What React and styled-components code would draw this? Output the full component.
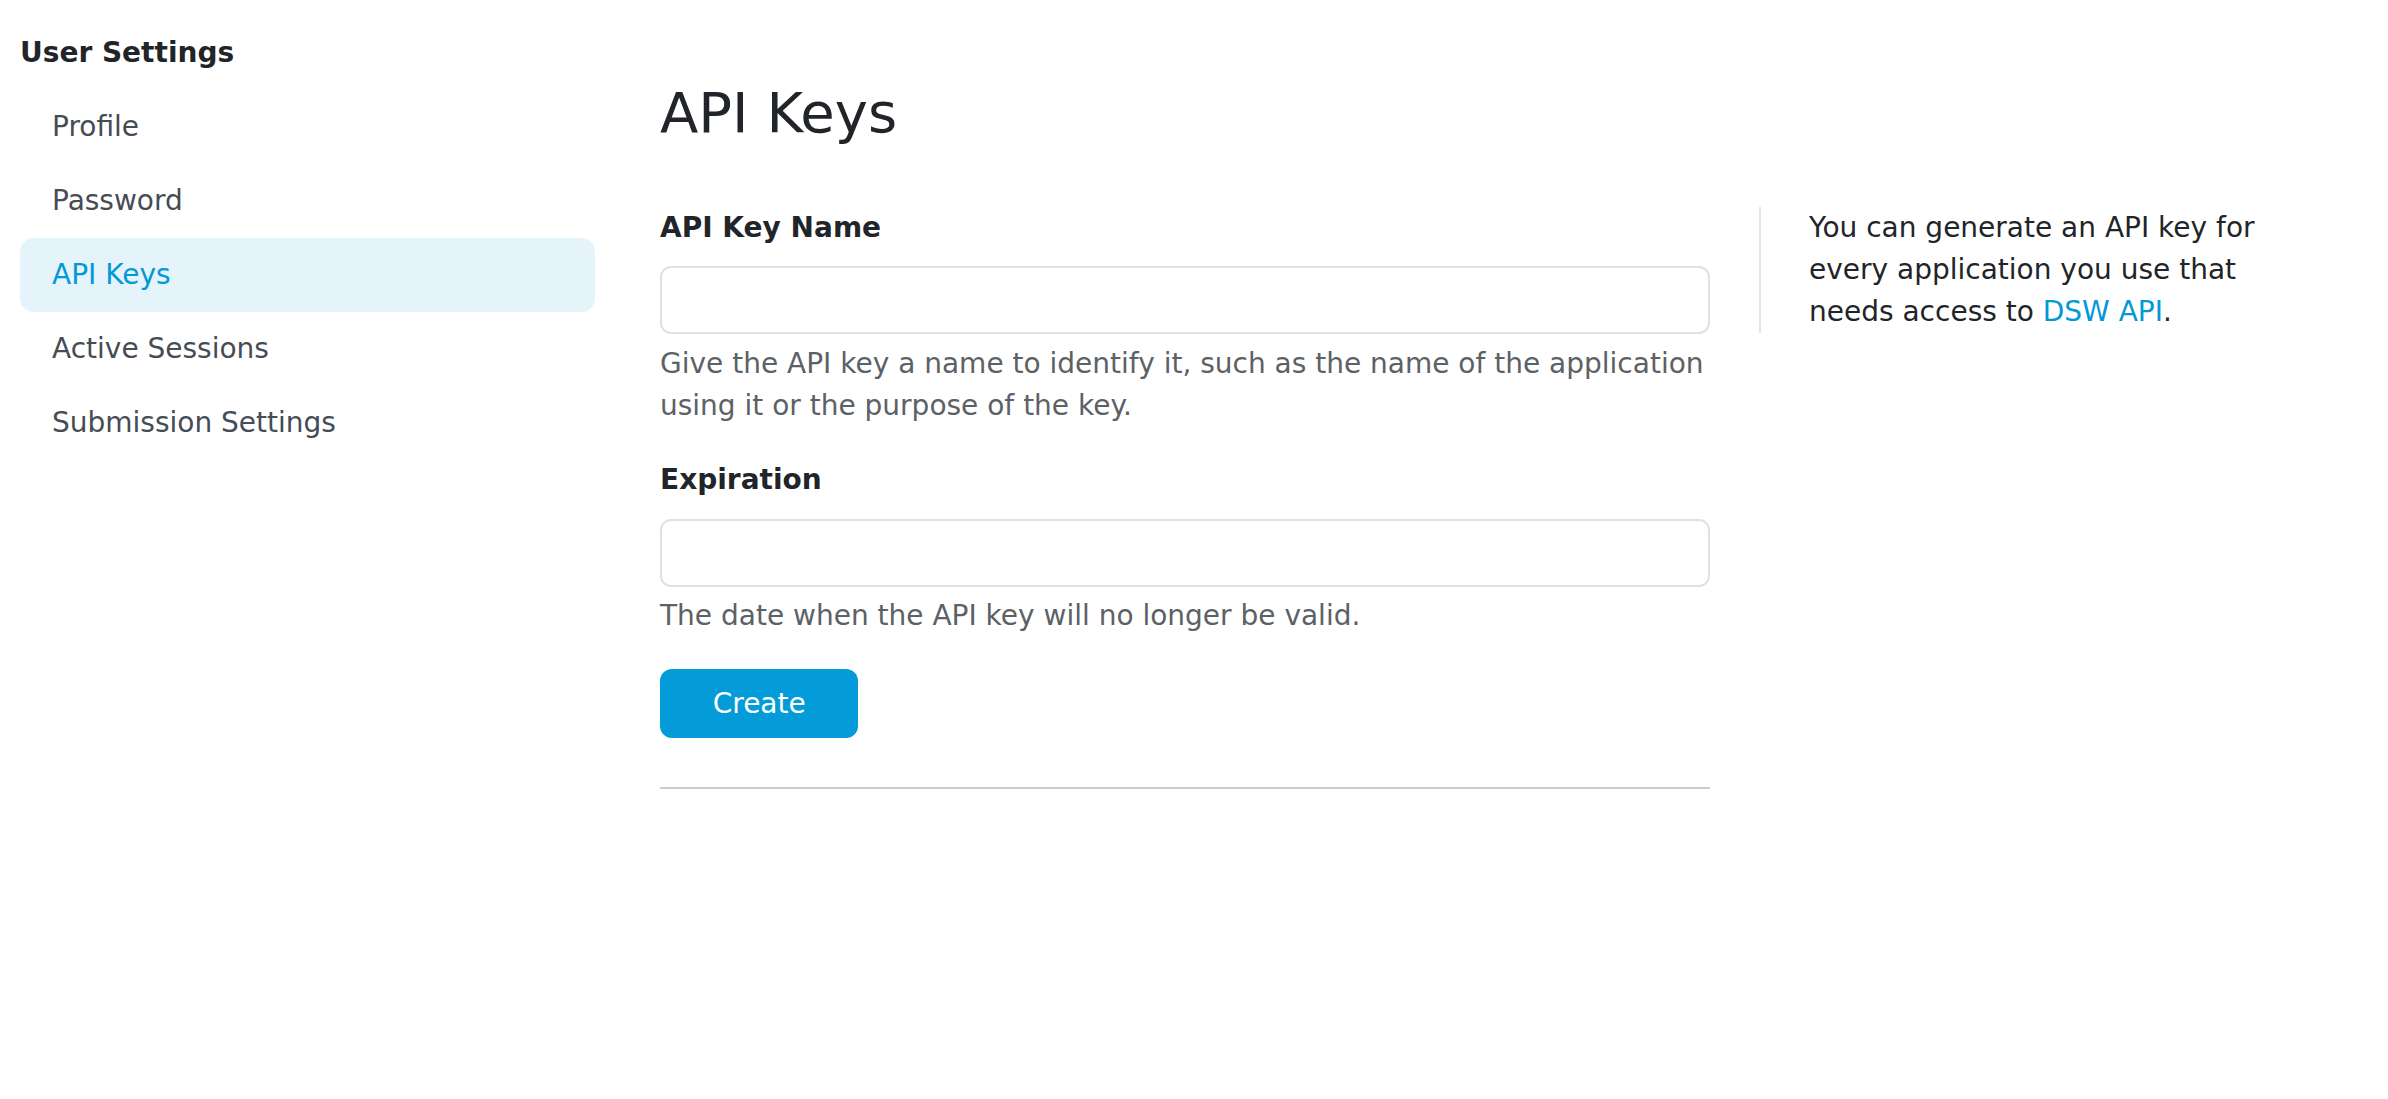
import styled, { createGlobalStyle } from "styled-components";

const GlobalStyle = createGlobalStyle`
    body {
        margin: 0;
        background: #ffffff;
        font-family: "DejaVu Sans", "Noto Sans", sans-serif;
        font-size: 28px;
        line-height: 1.5;
        color: #212529;
    }

    * {
        box-sizing: border-box;
    }
`

const menuItems = ["Profile", "Password", "API Keys", "Active Sessions", "Submission Settings"];

const App = () => {
    return (
        <>
            <GlobalStyle />

            <Page>

                {/* Sidebar */}
                <Sidebar>
                    <SidebarTitle>User Settings</SidebarTitle>

                    <Menu>
                        {menuItems.map((item) => (
                            <MenuItem key={item} $active={item === "API Keys"}>
                                {item}
                            </MenuItem>
                        ))}
                    </Menu>
                </Sidebar>

                {/* Content */}
                <Main>
                    <PageTitle>API Keys</PageTitle>

                    <ContentRow>

                        <Form>
                            <Field>
                                <Label htmlFor="api-key-name">API Key Name</Label>
                                <Input id="api-key-name" type="text" />
                                <HelpText>
                                    Give the API key a name to identify it, such as the name of the application using it or the purpose of the key.
                                </HelpText>
                            </Field>

                            <Field>
                                <Label htmlFor="expiration">Expiration</Label>
                                <Input id="expiration" type="text" />
                                <HelpText>The date when the API key will no longer be valid.</HelpText>
                            </Field>

                            <PrimaryButton>Create</PrimaryButton>

                            <Divider />
                        </Form>

                        <Aside>
                            <AsideText>
                                You can generate an API key for every application you use that needs access to <Link href="#">DSW API</Link>.
                            </AsideText>
                        </Aside>

                    </ContentRow>
                </Main>

            </Page>
        </>
    )
}

const Page = styled.div`
    display: flex;
    align-items: flex-start;
    padding: 35.5px 0 0 20px;
    min-height: 1099px;
`

const Sidebar = styled.nav`
    width: 575px;
    flex-shrink: 0;
`

const SidebarTitle = styled.div`
    font-weight: bold;
    line-height: 1.2;
`

const Menu = styled.div`
    display: flex;
    flex-direction: column;
    margin-top: 21px;
`

const MenuItem = styled.a`
    display: block;
    padding: 16px 32px;
    border-radius: 14px;
    line-height: 42px;
    color: ${(props) => (props.$active ? "#0299d6" : "#454c55")};
    background: ${(props) => (props.$active ? "#e5f3fb" : "transparent")};
    cursor: pointer;
`

const Main = styled.main`
    margin-left: 65px;
    flex: 1;
`

const PageTitle = styled.h1`
    margin: 43.5px 0 0;
    font-size: 56px;
    font-weight: normal;
    line-height: 1.2;
    color: #212529;
`

const ContentRow = styled.div`
    display: flex;
    align-items: flex-start;
    margin-top: 60.5px;
`

const Form = styled.div`
    width: 1050px;
    flex-shrink: 0;
`

const Field = styled.div`
    margin-bottom: 32px;
`

const Label = styled.label`
    display: block;
    font-weight: bold;
    margin-bottom: 17.7px;
`

const Input = styled.input`
    display: block;
    width: 100%;
    height: 68px;
    border: 2px solid #dee2e6;
    border-radius: 11px;
    font: inherit;
    padding: 0 20px;
    outline: none;
`

const HelpText = styled.div`
    margin-top: 8.5px;
    color: #5c6166;
`

const PrimaryButton = styled.button`
    display: block;
    height: 69px;
    margin-top: 2.5px;
    padding: 0 52.7px;
    border: none;
    border-radius: 12px;
    background: #039bd8;
    color: #ffffff;
    font: inherit;
    cursor: pointer;
`

const Divider = styled.hr`
    margin: 49px 0 0;
    border: none;
    border-top: 2px solid #cccccc;
`

const Aside = styled.aside`
    margin-left: 49px;
    padding-left: 48px;
    border-left: 2px solid #e3e5e8;
`

const AsideText = styled.p`
    margin: 0;
    width: 500px;
    line-height: 42px;
    color: #212529;
`

const Link = styled.a`
    color: #0299d6;
    text-decoration: none;
`

export default App;
